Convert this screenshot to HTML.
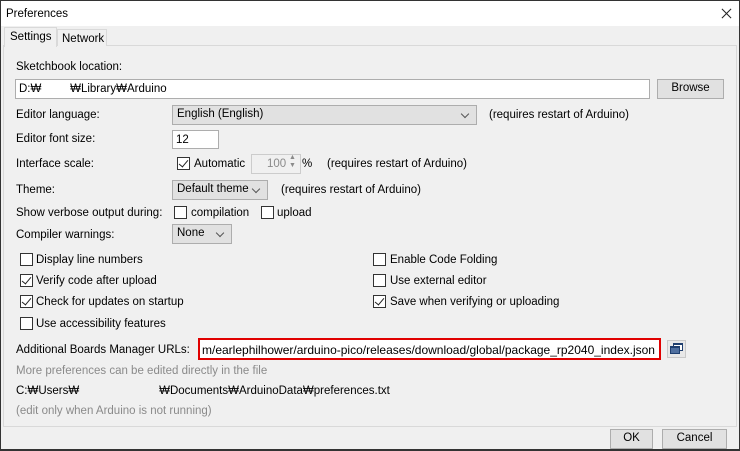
<!DOCTYPE html>
<html><head><style>
*{margin:0;padding:0;box-sizing:border-box}
body{width:740px;height:451px;background:#fff;font-family:"Liberation Sans","Noto Sans CJK KR",sans-serif;font-size:11.5px;color:#000;position:relative;overflow:hidden}
.win{position:absolute;left:0;top:0;width:740px;height:451px;border:1px solid #333;border-bottom:2px solid #333;background:#f0f0f0}
.title{position:absolute;left:0;top:0;width:738px;height:25px;background:#fff}
.a{position:absolute;white-space:nowrap;line-height:14px}
.box{position:absolute;border:1px solid #adadad;background:#fff}
.btn{position:absolute;border:1px solid #adadad;background:#e1e1e1;text-align:center;line-height:17px}
.dd{position:absolute;border:1px solid #adadad;background:#e1e1e1;padding-left:4px;line-height:17px}
.dd:after{content:"";position:absolute;right:8px;top:5px;width:5px;height:5px;border-right:1px solid #555;border-bottom:1px solid #555;transform:rotate(45deg)}
.cb{position:absolute;width:13px;height:13px;border:1px solid #333;background:#fff}
.cb.c:after{content:"";position:absolute;left:3px;top:0px;width:4px;height:8px;border-right:1.5px solid #222;border-bottom:1.5px solid #222;transform:rotate(40deg)}
.g{color:#8a8a8a}
</style></head><body>
<div class="win">
<div class="title"></div>
<div class="a" style="left:5px;top:6px">Preferences</div>
<div style="position:absolute;left:719px;top:12px;width:13px;height:1px;background:#222;transform:rotate(45deg)"></div>
<div style="position:absolute;left:719px;top:12px;width:13px;height:1px;background:#222;transform:rotate(-45deg)"></div>
<div style="position:absolute;left:2px;top:44px;width:734px;height:382px;border:1px solid #d9d9d9;background:#f0f0f0"></div>
<div style="position:absolute;left:3px;top:26px;width:53px;height:20px;border:1px solid #d9d9d9;border-bottom:none;background:#f0f0f0"></div>
<div class="a" style="left:9px;top:29px">Settings</div>
<div style="position:absolute;left:56px;top:28px;width:50px;height:17px;border:1px solid #d9d9d9;border-bottom:none;background:#f0f0f0"></div>
<div class="a" style="left:61px;top:31px">Network</div>

<div class="a" style="left:15px;top:59px">Sketchbook location:</div>
<div class="box" style="left:14px;top:78px;width:635px;height:20px"></div>
<div class="a" style="left:18px;top:81px">D:₩&nbsp;&nbsp;&nbsp;&nbsp;&nbsp;&nbsp;&nbsp;&nbsp;&nbsp;₩Library₩Arduino</div>
<div class="btn" style="left:656px;top:78px;width:67px;height:20px">Browse</div>

<div class="a" style="left:15px;top:107px">Editor language:</div>
<div class="dd" style="left:171px;top:104px;width:305px;height:20px">English (English)</div>
<div class="a" style="left:488px;top:107px">(requires restart of Arduino)</div>

<div class="a" style="left:15px;top:131px">Editor font size:</div>
<div class="box" style="left:171px;top:129px;width:47px;height:19px"></div>
<div class="a" style="left:175px;top:132px">12</div>

<div class="a" style="left:15px;top:156px">Interface scale:</div>
<div class="cb c" style="left:176px;top:156px"></div>
<div class="a" style="left:193px;top:156px">Automatic</div>
<div class="box" style="left:250px;top:153px;width:50px;height:20px;background:#f0f0f0;border-color:#ccc"></div>
<div class="a g" style="left:266px;top:156px">100</div>
<div class="a g" style="left:288px;top:153px;font-size:7px;line-height:8px">▲<br>▼</div>
<div class="a" style="left:301px;top:156px">%</div>
<div class="a" style="left:326px;top:156px">(requires restart of Arduino)</div>

<div class="a" style="left:15px;top:182px">Theme:</div>
<div class="dd" style="left:171px;top:179px;width:96px;height:20px">Default theme</div>
<div class="a" style="left:280px;top:182px">(requires restart of Arduino)</div>

<div class="a" style="left:15px;top:205px">Show verbose output during:</div>
<div class="cb" style="left:173px;top:205px"></div>
<div class="a" style="left:190px;top:205px">compilation</div>
<div class="cb" style="left:260px;top:205px"></div>
<div class="a" style="left:276px;top:205px">upload</div>

<div class="a" style="left:15px;top:227px">Compiler warnings:</div>
<div class="dd" style="left:171px;top:223px;width:60px;height:20px">None</div>

<div class="cb" style="left:19px;top:252px"></div><div class="a" style="left:35px;top:252px">Display line numbers</div>
<div class="cb c" style="left:19px;top:273px"></div><div class="a" style="left:35px;top:273px">Verify code after upload</div>
<div class="cb c" style="left:19px;top:294px"></div><div class="a" style="left:35px;top:294px">Check for updates on startup</div>
<div class="cb" style="left:19px;top:316px"></div><div class="a" style="left:35px;top:316px">Use accessibility features</div>
<div class="cb" style="left:372px;top:252px"></div><div class="a" style="left:389px;top:252px">Enable Code Folding</div>
<div class="cb" style="left:372px;top:273px"></div><div class="a" style="left:389px;top:273px">Use external editor</div>
<div class="cb c" style="left:372px;top:294px"></div><div class="a" style="left:389px;top:294px">Save when verifying or uploading</div>

<div class="a" style="left:15px;top:342px">Additional Boards Manager URLs:</div>
<div style="position:absolute;left:197px;top:337px;width:463px;height:22px;border:2px solid #e00000;background:#fff"></div>
<div class="a" style="left:201px;top:342px;font-size:12px">m/earlephilhower/arduino-pico/releases/download/global/package_rp2040_index.json</div>
<div style="position:absolute;left:666px;top:339px;width:19px;height:18px;border:1px solid #c9c9c9;background:#e8e8e8"></div>
<div style="position:absolute;left:672px;top:342px;width:10px;height:8px;border:1px solid #1f3f6f;border-top-width:2px;background:#fff"></div>
<div style="position:absolute;left:669px;top:345px;width:10px;height:8px;border:1px solid #1f3f6f;border-top-width:2px;background:#4f6f9f"></div>

<div class="a g" style="left:15px;top:363px">More preferences can be edited directly in the file</div>
<div class="a" style="left:15px;top:383px">C:₩Users₩&nbsp;&nbsp;&nbsp;&nbsp;&nbsp;&nbsp;&nbsp;&nbsp;&nbsp;&nbsp;&nbsp;&nbsp;&nbsp;&nbsp;&nbsp;&nbsp;&nbsp;&nbsp;&nbsp;&nbsp;&nbsp;&nbsp;&nbsp;&nbsp;&nbsp;₩Documents₩ArduinoData₩preferences.txt</div>
<div class="a g" style="left:15px;top:403px">(edit only when Arduino is not running)</div>

<div class="btn" style="left:609px;top:428px;width:43px;height:20px">OK</div>
<div class="btn" style="left:661px;top:428px;width:65px;height:20px">Cancel</div>
</div>
</body></html>
